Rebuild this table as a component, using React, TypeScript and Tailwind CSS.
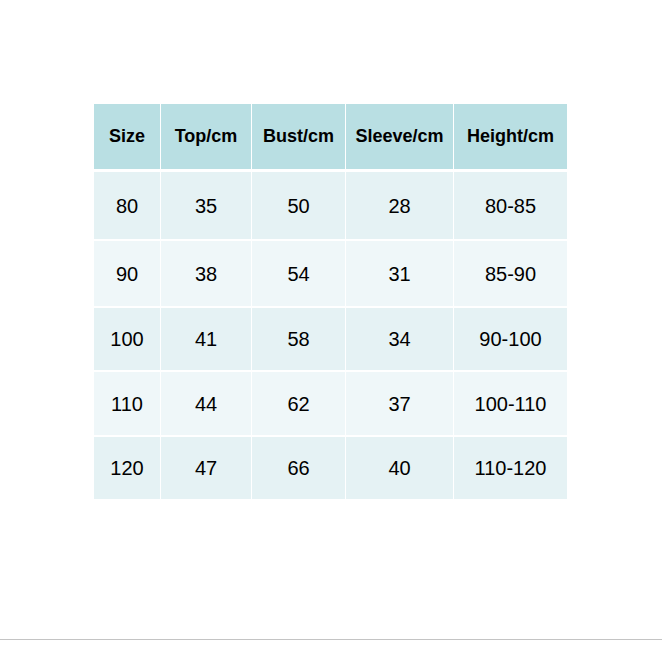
import React from "react";

const headers = ["Size", "Top/cm", "Bust/cm", "Sleeve/cm", "Height/cm"];
const rows = [
  ["80", "35", "50", "28", "80-85"],
  ["90", "38", "54", "31", "85-90"],
  ["100", "41", "58", "34", "90-100"],
  ["110", "44", "62", "37", "100-110"],
  ["120", "47", "66", "40", "110-120"],
];
const rowH = ["h-[67px]", "h-[65px]", "h-[62px]", "h-[63px]", "h-[62px]"];
const widths = ["w-[66px]", "w-[90px]", "w-[93px]", "w-[107px]", "w-[113px]"];

export default function App() {
  return (
    <div
      className="w-[662px] h-[662px] bg-white relative overflow-hidden"
      style={{ fontFamily: '"Liberation Sans", Arial, sans-serif' }}
    >
      <div className="pt-[104px] pl-[94px] flex flex-col gap-y-[2px]">
        <div className="flex gap-x-px h-[65px] mb-px">
          {headers.map((h, i) => (
            <div
              key={h}
              className={`${widths[i]} bg-[#b9dfe3] flex items-center justify-center text-[18px] font-bold text-black`}
            >
              {h}
            </div>
          ))}
        </div>
        {rows.map((r, ri) => (
          <div key={ri} className={`flex gap-x-px ${rowH[ri]}`}>
            {r.map((c, ci) => (
              <div
                key={ci}
                className={`${widths[ci]} ${ri % 2 === 0 ? "bg-[#e5f2f4]" : "bg-[#eff7f9]"} flex items-center justify-center text-[20px] text-black`}
              >
                {c}
              </div>
            ))}
          </div>
        ))}
      </div>
      <div className="absolute left-0 right-0 top-[639px] h-px bg-[#c4c4c4]" />
    </div>
  );
}
